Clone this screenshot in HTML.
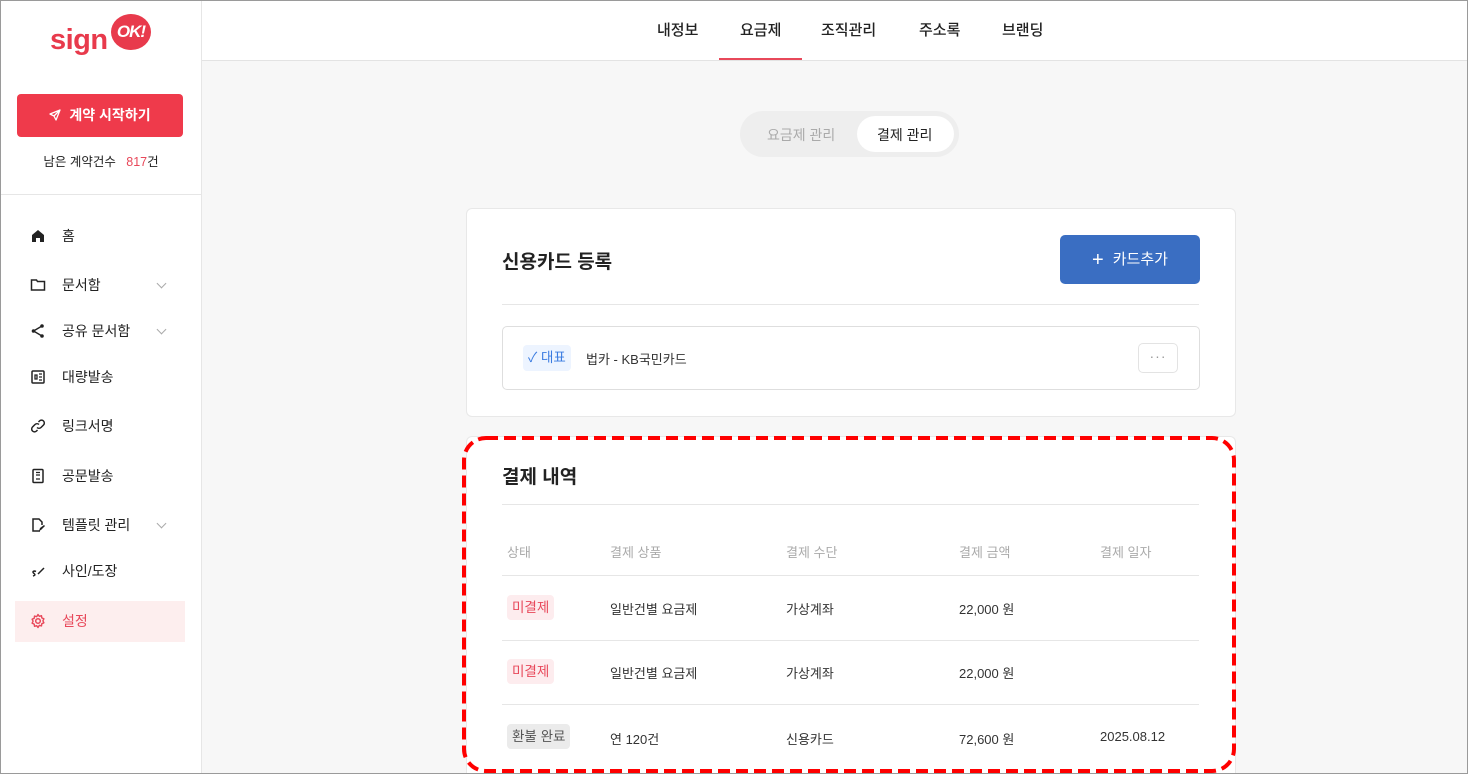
<!DOCTYPE html>
<html><head><meta charset="utf-8"><style>
*{margin:0;padding:0;box-sizing:border-box}
html{width:1468px;height:774px;overflow:hidden}
body{width:1468px;height:774px;overflow:hidden;background:#f7f7f7;font-family:"Liberation Sans","Noto Sans CJK KR",sans-serif;color:#222;position:relative}
.abs{position:absolute}
.frame{position:absolute;left:0;top:0;width:1468px;height:774px;border:1px solid #9a9a9a;pointer-events:none;z-index:20}
.side{left:0;top:0;width:202px;height:774px;background:#fff;border-right:1px solid #e6e6e6}
.top{left:202px;top:0;width:1266px;height:61px;background:#fff;border-bottom:1px solid #e3e3e3}
.tab{top:19px;font-size:15px;color:#222;font-weight:500}
.nav{left:0;width:202px;height:40px;display:flex;align-items:center;font-size:14px;color:#222}
.nav svg{position:absolute;left:30px}
.nav span{position:absolute;left:62px}
.chev{position:absolute;left:158px;width:7px;height:7px;border-right:1.3px solid #aaa;border-bottom:1.3px solid #aaa;transform:rotate(45deg);margin-top:-4px}
.card{background:#fff;border:1px solid #e8e8e8;border-radius:6px}
.th{top:542px;font-size:13px;color:#aaa}
.td{font-size:13px;color:#333}
.hl{left:502px;width:697px;height:1px;background:#e6e6e6}
.badge{font-size:13.5px;padding:0 5px;height:25px;line-height:25px;border-radius:4px}
.red{background:#fdecee;color:#e8485a}
.gray{background:#ebebeb;color:#555}
</style></head><body>
<div class="abs side"></div>
<div class="abs" style="left:50px;top:24px;font-size:29px;font-weight:700;color:#e83a4c;letter-spacing:-0.5px">sign</div>
<div class="abs" style="left:111px;top:14px;width:40px;height:36px;border-radius:50%;background:#e83a4c;color:#fff;font-weight:900;font-size:17px;line-height:36px;text-align:center;font-style:italic;letter-spacing:-1px">OK!</div>
<div class="abs" style="left:17px;top:94px;width:166px;height:43px;background:#ef3a4b;border-radius:4px;color:#fff;font-size:14px;font-weight:700;text-align:center;line-height:43px">
<svg width="12" height="12" viewBox="0 0 12 12" style="vertical-align:-1px;margin-right:8px"><path d="M11 1L1 5l4 2 2 4z M5 7l6-6" fill="none" stroke="#fff" stroke-width="1.3" stroke-linejoin="round"/></svg>계약 시작하기</div>
<div class="abs" style="left:0;width:202px;top:151px;text-align:center;font-size:12.5px;color:#222">남은 계약건수 &nbsp; <span style="color:#e8485a">817</span>건</div>
<div class="abs" style="left:0;top:194px;width:202px;height:1px;background:#e6e6e6"></div>

<div class="abs nav" style="top:216px"><svg width="16" height="16" viewBox="0 0 16 16"><path d="M2 7L8 2l6 5v7h-4v-4H6v4H2z" fill="#222"/></svg><span>홈</span></div>
<div class="abs nav" style="top:265px"><svg width="16" height="16" viewBox="0 0 16 16"><path d="M1.5 3h5l1 1.5h7V13h-13z" fill="none" stroke="#222" stroke-width="1.5"/></svg><span>문서함</span><i class="chev"></i></div>
<div class="abs nav" style="top:311px"><svg width="16" height="16" viewBox="0 0 16 16"><circle cx="3.5" cy="8" r="1.8" fill="#222"/><circle cx="12" cy="3" r="1.8" fill="#222"/><circle cx="12" cy="13" r="1.8" fill="#222"/><path d="M3.5 8L12 3M3.5 8L12 13" stroke="#222" stroke-width="1.4"/></svg><span>공유 문서함</span><i class="chev"></i></div>
<div class="abs nav" style="top:357px"><svg width="16" height="16" viewBox="0 0 16 16"><rect x="2" y="2" width="12" height="12" rx="1" fill="none" stroke="#222" stroke-width="1.5"/><path d="M5 6h2v4H5zM9 5h3M9 8h3M9 11h3" stroke="#222" stroke-width="1.3" fill="none"/></svg><span>대량발송</span></div>
<div class="abs nav" style="top:406px"><svg width="16" height="16" viewBox="0 0 16 16"><path d="M7 9.5a3 3 0 0 0 4 0l2.5-2.5a2.8 2.8 0 0 0-4-4L8.5 4M9 6.5a3 3 0 0 0-4 0L2.5 9a2.8 2.8 0 0 0 4 4l1-1" fill="none" stroke="#222" stroke-width="1.5"/></svg><span>링크서명</span></div>
<div class="abs nav" style="top:456px"><svg width="16" height="16" viewBox="0 0 16 16"><rect x="3" y="1.5" width="10" height="13" rx="1" fill="none" stroke="#222" stroke-width="1.5"/><path d="M6 4.5h4M6 7h4M6 11h4" stroke="#222" stroke-width="1.3"/></svg><span>공문발송</span></div>
<div class="abs nav" style="top:505px"><svg width="16" height="16" viewBox="0 0 16 16"><path d="M10 14H3V2h6l3 3v3" fill="none" stroke="#222" stroke-width="1.5"/><path d="M9 14l1-3 4-3 1 1-4 4z" fill="#222"/></svg><span>템플릿 관리</span><i class="chev"></i></div>
<div class="abs nav" style="top:551px"><svg width="16" height="16" viewBox="0 0 16 16"><path d="M6 8.5c-2-1-4 0-2.5 1.5S6 12 3 13M8 11l6-6" fill="none" stroke="#222" stroke-width="1.5"/></svg><span>사인/도장</span></div>
<div class="abs" style="left:15px;top:601px;width:170px;height:41px;background:#fdeeee"></div>
<div class="abs nav" style="top:601px;color:#e8485a"><svg width="16" height="16" viewBox="0 0 16 16"><circle cx="8" cy="8" r="2.3" fill="none" stroke="#e8485a" stroke-width="1.5"/><path d="M8 1.5l1.3 1.8 2.2-.6.3 2.2 2.1.9-1 2 1 2-2.1.9-.3 2.2-2.2-.6L8 14.5l-1.3-1.8-2.2.6-.3-2.2-2.1-.9 1-2-1-2 2.1-.9.3-2.2 2.2.6z" fill="none" stroke="#e8485a" stroke-width="1.4" stroke-linejoin="round"/></svg><span>설정</span></div>

<div class="abs top"></div>
<div class="abs tab" style="left:657px">내정보</div>
<div class="abs tab" style="left:740px">요금제</div>
<div class="abs tab" style="left:821px">조직관리</div>
<div class="abs tab" style="left:919px">주소록</div>
<div class="abs tab" style="left:1002px">브랜딩</div>
<div class="abs" style="left:719px;top:58px;width:83px;height:2px;background:#e8485a"></div>

<div class="abs" style="left:740px;top:111px;width:219px;height:46px;background:#eeeeee;border-radius:23px"></div>
<div class="abs" style="left:857px;top:116px;width:97px;height:36px;background:#fff;border-radius:18px"></div>
<div class="abs" style="left:767px;top:125px;font-size:14px;color:#aaa">요금제 관리</div>
<div class="abs" style="left:877px;top:125px;font-size:14px;color:#222">결제 관리</div>

<div class="abs card" style="left:466px;top:208px;width:770px;height:209px"></div>
<div class="abs" style="left:502px;top:247px;font-size:19px;font-weight:700">신용카드 등록</div>
<div class="abs" style="left:1060px;top:235px;width:140px;height:49px;background:#3a6ec2;border-radius:5px;color:#fff;font-size:15px;text-align:center;line-height:49px"><span style="font-size:20px;vertical-align:-2px;margin-right:9px">+</span>카드추가</div>
<div class="abs hl" style="top:304px"></div>
<div class="abs" style="left:502px;top:326px;width:698px;height:64px;border:1px solid #dedede;border-radius:5px"></div>
<div class="abs badge" style="left:523px;top:345px;height:26px;line-height:26px;background:#edf4ff;color:#3a7be0">✓ 대표</div>
<div class="abs" style="left:586px;top:349px;font-size:13px;color:#333">법카 - KB국민카드</div>
<div class="abs" style="left:1138px;top:343px;width:40px;height:30px;border:1px solid #e3e3e3;border-radius:5px;text-align:center;line-height:24px;color:#999;font-size:14px;letter-spacing:1px">···</div>

<div class="abs card" style="left:466px;top:436px;width:770px;height:338px;border-bottom:none;border-radius:6px 6px 0 0"></div>
<div class="abs" style="left:502px;top:462px;font-size:19px;font-weight:700">결제 내역</div>
<div class="abs hl" style="top:504px"></div>
<div class="abs th" style="left:507px">상태</div>
<div class="abs th" style="left:610px">결제 상품</div>
<div class="abs th" style="left:786px">결제 수단</div>
<div class="abs th" style="left:959px">결제 금액</div>
<div class="abs th" style="left:1100px">결제 일자</div>
<div class="abs hl" style="top:575px"></div>
<div class="abs hl" style="top:640px"></div>
<div class="abs hl" style="top:704px"></div>

<div class="abs badge red" style="left:507px;top:595px">미결제</div>
<div class="abs td" style="left:610px;top:599px">일반건별 요금제</div>
<div class="abs td" style="left:786px;top:599px">가상계좌</div>
<div class="abs td" style="left:959px;top:599px">22,000 원</div>

<div class="abs badge red" style="left:507px;top:659px">미결제</div>
<div class="abs td" style="left:610px;top:663px">일반건별 요금제</div>
<div class="abs td" style="left:786px;top:663px">가상계좌</div>
<div class="abs td" style="left:959px;top:663px">22,000 원</div>

<div class="abs badge gray" style="left:507px;top:724px">환불 완료</div>
<div class="abs td" style="left:610px;top:729px">연 120건</div>
<div class="abs td" style="left:786px;top:729px">신용카드</div>
<div class="abs td" style="left:959px;top:729px">72,600 원</div>
<div class="abs td" style="left:1100px;top:729px">2025.08.12</div>

<svg class="abs" style="left:0;top:0;z-index:10" width="1468" height="774"><rect x="464" y="438" width="770" height="333" rx="22" fill="none" stroke="#f00" stroke-width="4" stroke-dasharray="12 6"/></svg>
<div class="frame"></div>
</body></html>
